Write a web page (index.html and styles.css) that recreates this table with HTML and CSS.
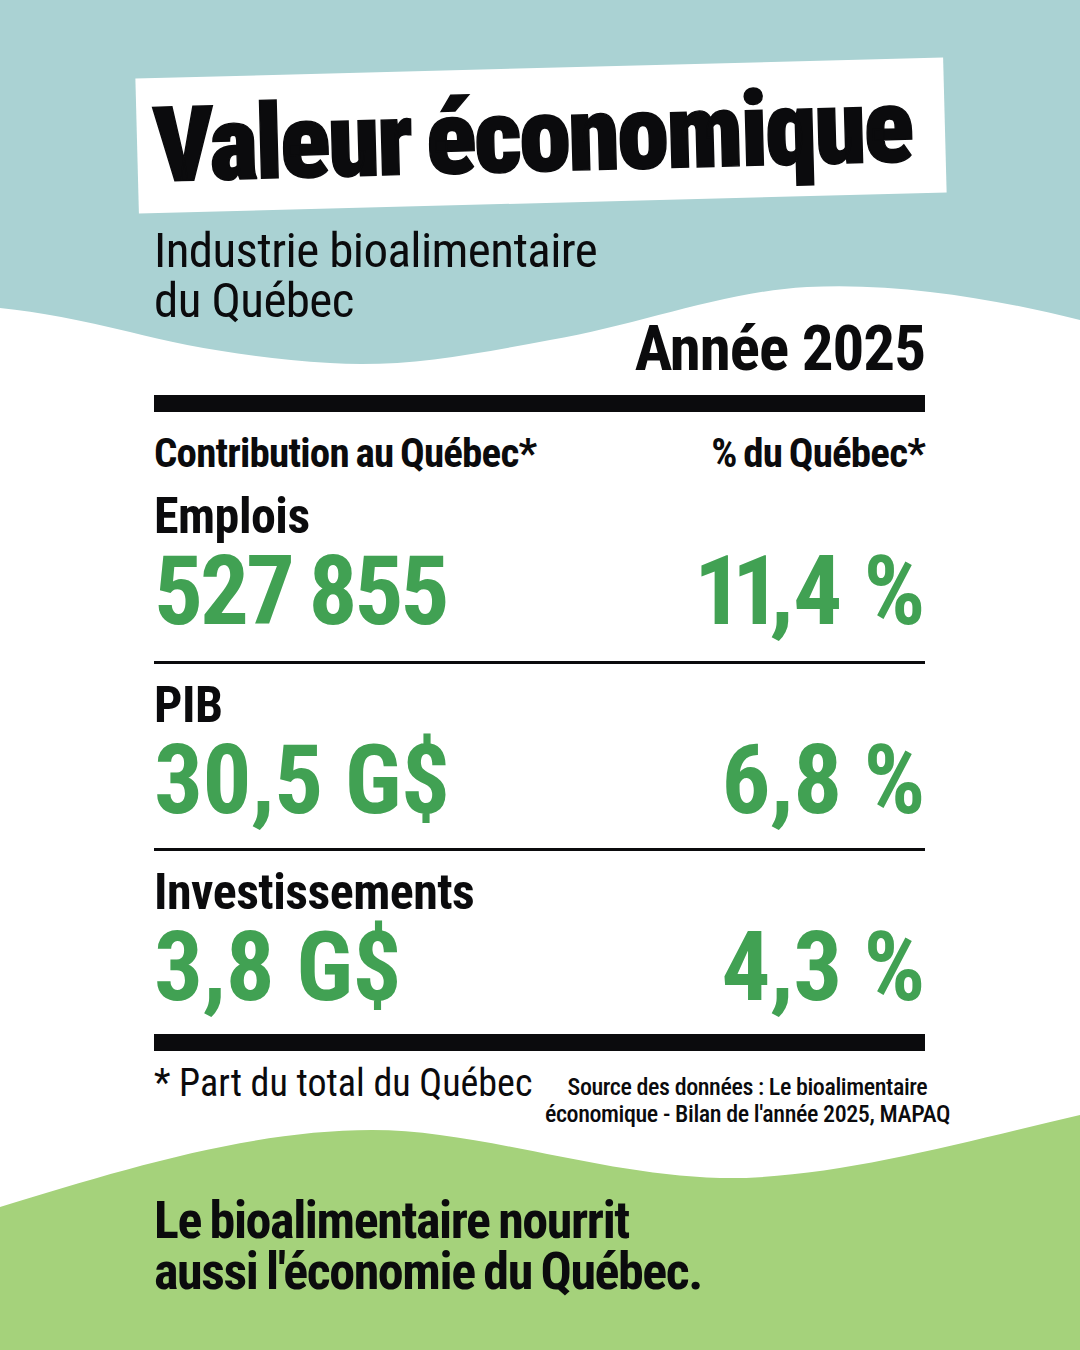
FILE: index.html
```html
<!DOCTYPE html>
<html lang="fr">
<head>
<meta charset="utf-8">
<title>Valeur économique</title>
<link rel="stylesheet" href="styles.css">
</head>
<body>
<div class="page">
  <svg class="bg" width="1080" height="1350" viewBox="0 0 1080 1350" aria-hidden="true">
    <path class="teal" d="M0,0 H1080 V320 C1000,300 900,282 807,287 C720,292 640,325 550,340 C470,355 400,368 330,363 C250,358 180,345 130,332 C80,320 40,312 0,308 Z"/>
    <path class="green" d="M0,1207 C120,1170 250,1130 372,1130 C480,1130 600,1175 720,1178 C830,1180 960,1143 1080,1115 V1350 H0 Z"/>
  </svg>
  <main class="content">
    <div class="banner"><h1 class="title">Valeur économique</h1></div>
    <p class="subtitle">Industrie bioalimentaire<br>du Québec</p>
    <p class="year">Année 2025</p>
    <div class="bar"></div>
    <div class="head-row">
      <span>Contribution au Québec*</span>
      <span>% du Québec*</span>
    </div>
    <section class="stat">
      <h2 class="label">Emplois</h2>
      <div class="values"><span class="tight">527 855</span><span><span class="ones">11</span>,4 %</span></div>
    </section>
    <div class="rule"></div>
    <section class="stat">
      <h2 class="label">PIB</h2>
      <div class="values"><span>30,5 G$</span><span>6,8 %</span></div>
    </section>
    <div class="rule rule-2"></div>
    <section class="stat stat-last">
      <h2 class="label">Investissements</h2>
      <div class="values"><span>3,8 G$</span><span>4,3 %</span></div>
    </section>
    <div class="bar bar-bottom"></div>
    <div class="foot-row">
      <p class="footnote">* Part du total du Québec</p>
      <p class="source">Source des données : Le bioalimentaire<br>économique - Bilan de l'année 2025, MAPAQ</p>
    </div>
    <p class="closing">Le bioalimentaire nourrit<br>aussi l'économie du Québec.</p>
  </main>
</div>
</body>
</html>
```
FILE: styles.css
```css
html, body {
  margin: 0;
  padding: 0;
}
body {
  width: 1080px;
  height: 1350px;
  overflow: hidden;
  background: #ffffff;
  font-family: "Roboto Condensed", "DejaVu Sans Condensed", "Liberation Sans Narrow", "Roboto", sans-serif;
  color: #0b0b0d;
}
.page {
  position: relative;
  width: 1080px;
  height: 1350px;
  overflow: hidden;
}
.bg {
  position: absolute;
  left: 0;
  top: 0;
}
.teal { fill: #aad2d3; }
.green { fill: #a5d27b; }
.content {
  position: relative;
  box-sizing: border-box;
  width: 1080px;
  padding: 68px 155px 0 154px;
  display: flex;
  flex-direction: column;
}
.content p, .content h1, .content h2 { margin: 0; }

.banner {
  box-sizing: border-box;
  width: 808px;
  height: 135px;
  margin-left: -17px;
  background: #ffffff;
  padding-left: 16px;
  transform: rotate(-1.5deg);
}
.title {
  font-size: 104px;
  line-height: 135px;
  font-weight: 900;
  letter-spacing: -2.4px;
  word-spacing: -6px;
  white-space: nowrap;
  -webkit-text-stroke: 1.4px #0b0b0d;
}
.subtitle {
  margin-top: 23px !important;
  font-size: 49px;
  line-height: 50px;
  font-weight: 400;
  letter-spacing: -0.6px;
}
.year {
  align-self: flex-end;
  font-size: 63px;
  line-height: 45px;
  font-weight: 700;
  letter-spacing: -1px;
}
.bar {
  height: 17px;
  background: #0b0b0d;
  margin-top: 24px;
}
.head-row {
  display: flex;
  justify-content: space-between;
  margin-top: 21px;
  font-size: 41px;
  line-height: 41px;
  font-weight: 700;
  letter-spacing: -0.8px;
  word-spacing: -2px;
}
.stat { display: flex; flex-direction: column; }
.label {
  font-size: 50px;
  line-height: 50px;
  font-weight: 700;
  letter-spacing: -0.5px;
  margin-top: 17px !important;
}
.stat + .rule + .stat .label { margin-top: 16px !important; }
.stat-last .label { margin-top: 15px !important; }
.values {
  display: flex;
  justify-content: space-between;
  margin-top: 2px;
  font-size: 97px;
  line-height: 97px;
  font-weight: 700;
  letter-spacing: -0.5px;
  color: #41a153;
  white-space: nowrap;
}
.tight {
  letter-spacing: -3px;
  word-spacing: -3px;
}
.ones { letter-spacing: -11px; }
.rule {
  height: 3px;
  background: #0b0b0d;
  margin-top: 21px;
}
.rule-2 { margin-top: 19px; }
.bar-bottom { margin-top: 18px; }
.foot-row {
  display: flex;
  align-items: flex-start;
  margin-top: 12px;
}
.footnote {
  font-size: 38px;
  line-height: 41px;
  font-weight: 400;
  letter-spacing: 0;
  white-space: nowrap;
}
.source {
  flex-shrink: 0;
  margin: 11px -25px 0 auto !important;
  text-align: center;
  font-size: 24px;
  line-height: 27px;
  font-weight: 500;
  letter-spacing: -0.4px;
  white-space: nowrap;
}
.closing {
  margin-top: 67px !important;
  font-size: 52px;
  line-height: 51px;
  font-weight: 700;
  letter-spacing: -1.4px;
  word-spacing: -2px;
}
```
